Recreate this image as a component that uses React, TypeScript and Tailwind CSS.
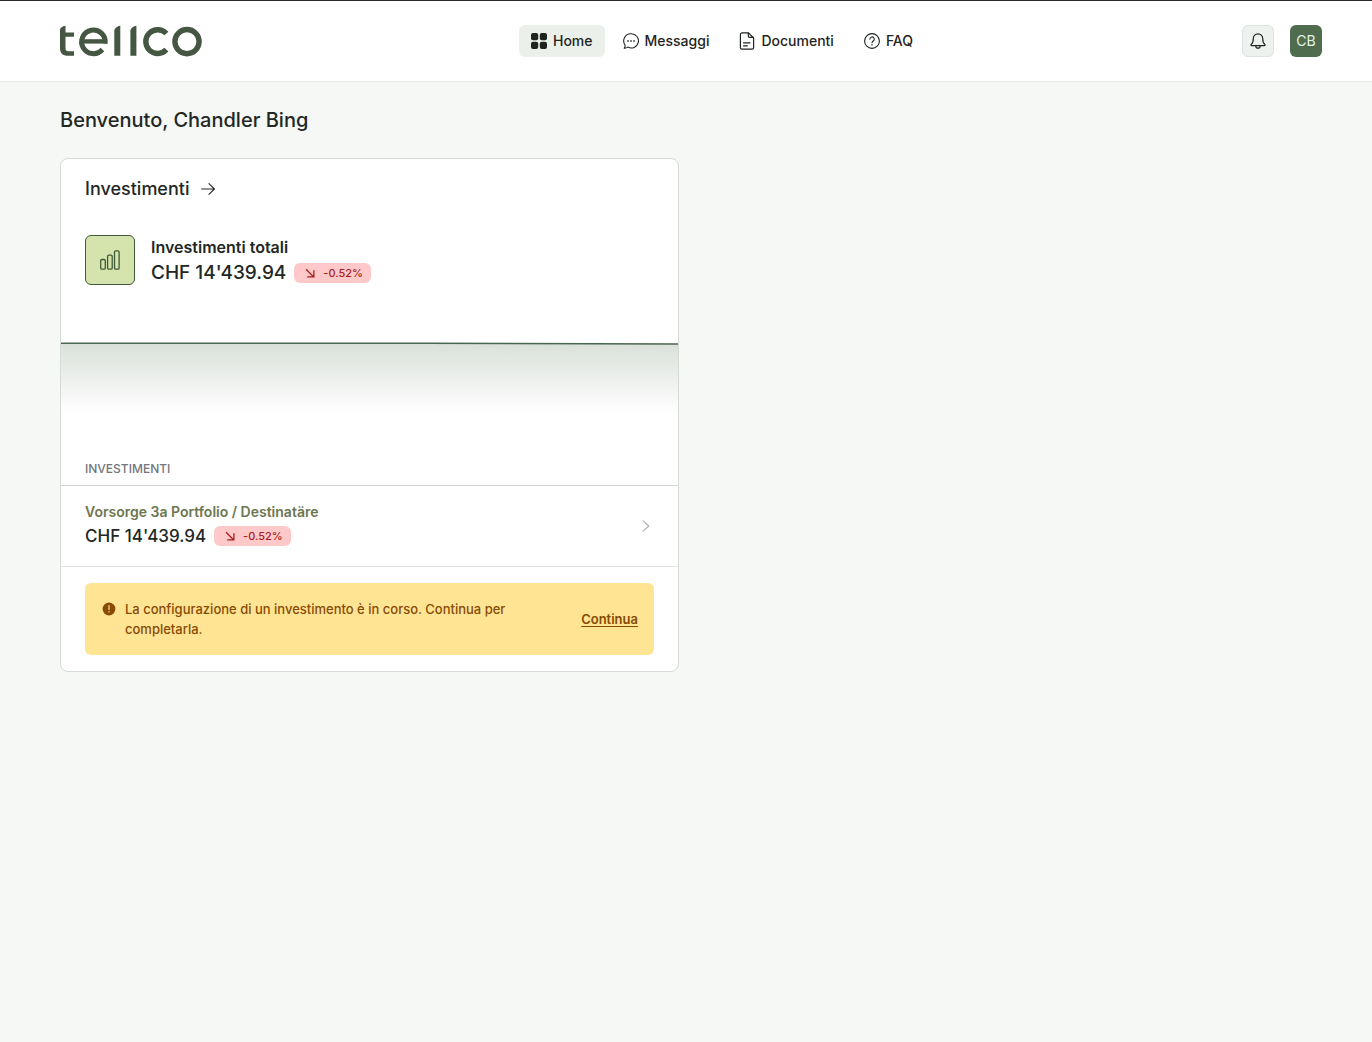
import React from 'react';

type IconProps = { className?: string };

const Logo: React.FC = () => (
  <svg viewBox="0 0 142 32" className="w-[142px] h-8" fill="none" role="img" aria-label="tellco">
    <path d="M0 4.8C0 2.800 2.400 1.200 5.500.8v6.700H14v4.200H5.500v11.600c0 2 .9 2.900 2.900 2.900H14v4.600H8.200C2.800 30.800 0 28.400 0 23.300z" fill="#455643" />
    <path d="M54.300 6c0-2.600 2.400-4.600 6-5.300v30.100h-6zM70.400 6c0-2.600 2.400-4.600 6-5.300v30.100h-6z" fill="#455643" />
    <path d="M22 16.400h24" stroke="#455643" strokeWidth="4.400" />
    <path d="M45.100 18.600A11.800 11.800 0 1 0 42.400 24.500" stroke="#455643" strokeWidth="5" />
    <path d="M106.400 8.500A11.900 11.900 0 1 0 106.400 24.700" stroke="#455643" strokeWidth="5.400" />
    <circle cx="127" cy="16.600" r="12.100" stroke="#455643" strokeWidth="5.400" />
  </svg>
);

const GridIcon: React.FC<IconProps> = ({ className }) => (
  <svg viewBox="0 0 16 16" className={className} fill="currentColor" aria-hidden="true">
    <rect x="0" y="0" width="7.200" height="7.200" rx="2" />
    <rect x="8.800" y="0" width="7.200" height="7.200" rx="2" />
    <rect x="0" y="8.800" width="7.200" height="7.200" rx="2" />
    <rect x="8.800" y="8.800" width="7.200" height="7.200" rx="2" />
  </svg>
);

const ChatIcon: React.FC<IconProps> = ({ className }) => (
  <svg viewBox="0 0 16 16" className={className} fill="none" stroke="currentColor" strokeWidth="1.100" strokeLinejoin="round" aria-hidden="true">
    <path d="M8.300.8a7.100 7.100 0 1 1-3.400 13.300c-1 .8-2.300 1.100-3.700 1 .8-.9 1.100-1.900.9-3A7.100 7.100 0 0 1 8.300.8z" />
    <path d="M4.300 7.900h1.500M7.300 7.900h1.500M10.300 7.900h1.500" strokeWidth="1.500" />
  </svg>
);

const DocumentIcon: React.FC<IconProps> = ({ className }) => (
  <svg viewBox="0 0 16 18" className={className} fill="none" stroke="currentColor" strokeWidth="1.200" strokeLinecap="round" strokeLinejoin="round" aria-hidden="true">
    <path d="M9.500.9H3A1.600 1.600 0 0 0 1.400 2.500v13A1.600 1.600 0 0 0 3 17.100h10a1.600 1.600 0 0 0 1.600-1.600V6z" />
    <path d="M9.300 1v2.900c0 .9.500 1.400 1.400 1.400h3.700" />
    <path d="M4.500 10.800h6.500M4.500 13.800h3.800" />
  </svg>
);

const QuestionIcon: React.FC<IconProps> = ({ className }) => (
  <svg viewBox="0 0 16 16" className={className} fill="none" stroke="currentColor" strokeWidth="1.100" strokeLinecap="round" aria-hidden="true">
    <circle cx="8" cy="8" r="7.400" />
    <path d="M5.900 6.100a2.200 2.200 0 1 1 3.300 1.900C8.400 8.500 8 8.900 8 9.800" />
    <path d="M8 11.800v.1" strokeWidth="1.400" />
  </svg>
);

const BellIcon: React.FC<IconProps> = ({ className }) => (
  <svg viewBox="0 0 16 16" className={className} fill="none" stroke="currentColor" strokeWidth="1.200" strokeLinecap="round" strokeLinejoin="round" aria-hidden="true">
    <path d="M8 .8a4.700 4.700 0 0 0-4.700 4.700c0 3-.5 4.600-2 5.800-.7.500-.4 1.300.3 1.300h12.800c.7 0 1-.8.300-1.300-1.500-1.200-2-2.800-2-5.800A4.700 4.700 0 0 0 8 .8z" />
    <path d="M5.800 12.900a2.200 2.200 0 0 0 4.400 0" />
  </svg>
);

const BarsIcon: React.FC<IconProps> = ({ className }) => (
  <svg viewBox="0 0 20 20" className={className} fill="none" stroke="currentColor" strokeWidth="1.300" aria-hidden="true">
    <rect x=".7" y="9.500" width="4.600" height="9.700" rx="1.300" />
    <rect x="7.600" y="5.100" width="4.600" height="14.100" rx="1.300" />
    <rect x="14.500" y=".8" width="4.600" height="18.400" rx="1.300" />
  </svg>
);

const ArrowRightIcon: React.FC<IconProps> = ({ className }) => (
  <svg viewBox="0 0 14 14" className={className} fill="none" stroke="currentColor" strokeWidth="1.100" strokeLinecap="round" strokeLinejoin="round" aria-hidden="true">
    <path d="M.6 7h12.800M8 1.700 13.400 7 8 12.300" />
  </svg>
);

const ArrowDownRightIcon: React.FC<IconProps> = ({ className }) => (
  <svg viewBox="0 0 10 10" className={className} fill="none" stroke="currentColor" strokeWidth="1.300" aria-hidden="true">
    <path d="M1 1.300 8.600 8.700M8.900 2.200v6.700H2.200" />
  </svg>
);

const ChevronRightIcon: React.FC<IconProps> = ({ className }) => (
  <svg viewBox="0 0 8 12" className={className} fill="none" stroke="currentColor" strokeWidth="1.100" strokeLinecap="round" strokeLinejoin="round" aria-hidden="true">
    <path d="M1 .8 6.800 6 1 11.200" />
  </svg>
);

const AlertIcon: React.FC<IconProps> = ({ className }) => (
  <svg viewBox="0 0 16 16" className={className} aria-hidden="true">
    <circle cx="8" cy="8" r="6.400" fill="currentColor" />
    <path d="M8 4.600v3.900M8 10.700v.2" stroke="#ffe494" strokeWidth="1.200" strokeLinecap="round" />
  </svg>
);

const NAV_ITEMS = [
  { label: 'Home', icon: <GridIcon className="w-4 h-4" />, active: true },
  { label: 'Messaggi', icon: <ChatIcon className="w-4 h-4" />, active: false },
  { label: 'Documenti', icon: <DocumentIcon className="w-4 h-[18px]" />, active: false },
  { label: 'FAQ', icon: <QuestionIcon className="w-4 h-4" />, active: false },
];

const TrendBadge: React.FC<{ value: string }> = ({ value }) => (
  <span className="inline-flex items-center gap-2 h-5 pl-[11px] pr-2 rounded-md bg-[#ffc9c9] text-[11px] font-medium text-[#a8201f]">
    <ArrowDownRightIcon className="w-2.5 h-2.5" />
    {value}
  </span>
);

const BalanceChart: React.FC = () => (
  <svg viewBox="0 0 617 126" preserveAspectRatio="none" className="block w-full h-[126px] my-6" aria-hidden="true">
    <defs>
      <linearGradient id="balance-fill" x1="0" y1="32" x2="0" y2="102" gradientUnits="userSpaceOnUse">
        <stop offset="0" stopColor="#d9e0d9" />
        <stop offset="1" stopColor="#ffffff" />
      </linearGradient>
    </defs>
    <path d="M0 32.200 365 32.300 617 33V126H0z" fill="url(#balance-fill)" />
    <path d="M0 32.200 365 32.300 617 33" fill="none" stroke="#4b6650" strokeWidth="1.500" />
  </svg>
);

const Header: React.FC = () => (
  <header className="bg-white border-t border-t-[#2b2b2b] border-b border-b-[#e9ecea]">
    <div className="flex items-center justify-between h-20 pl-[60px] pr-[50px]">
      <a href="#"><Logo /></a>
      <nav className="flex items-center gap-1.5">
        {NAV_ITEMS.map(item => (
          <a
            key={item.label}
            href="#"
            className={`flex items-center gap-1.5 h-8 px-3 rounded-md text-sm font-medium text-[#1f2421] ${item.active ? 'bg-[#ebf0eb]' : ''}`}
          >
            {item.icon}
            {item.label}
          </a>
        ))}
      </nav>
      <div className="flex items-center gap-4">
        <button aria-label="Notifiche" className="flex items-center justify-center w-8 h-8 rounded-md border border-[#dde3de] bg-[#eef2ef] text-[#1f2421]">
          <BellIcon className="w-4 h-4" />
        </button>
        <button className="w-8 h-8 rounded-md bg-[#4f6c4e] text-sm text-[#e6f3e4]">CB</button>
      </div>
    </div>
  </header>
);

const InvestmentsCard: React.FC = () => (
  <section className="rounded-lg border border-[#d5dbd6] bg-white overflow-hidden">
    <div className="px-6 pt-4">
      <h2 className="text-lg font-medium">
        <a href="#" className="inline-flex items-center gap-3">
          Investimenti
          <ArrowRightIcon className="w-3.5 h-3.5" />
        </a>
      </h2>
      <div className="flex items-start gap-4 mt-8">
        <div className="flex items-center justify-center w-[50px] h-[50px] rounded-md border border-[#3f5a37] bg-[#d5e3ad] text-[#3f5a37]">
          <BarsIcon className="w-5 h-5" />
        </div>
        <div>
          <h3 className="text-base leading-6 font-semibold">Investimenti totali</h3>
          <div className="flex items-center gap-2">
            <span className="text-[19px] leading-7 font-medium">CHF 14'439.94</span>
            <TrendBadge value="-0.52%" />
          </div>
        </div>
      </div>
    </div>

    <BalanceChart />

    <h3 className="px-6 pb-2 border-b border-[#d2d6d3] text-xs font-medium text-[#73767a]">INVESTIMENTI</h3>
    <a href="#" className="flex items-center justify-between px-6 py-4 border-b border-[#e1e5e2]">
      <div>
        <div className="text-sm font-semibold text-[#6d7650]">Vorsorge 3a Portfolio / Destinatäre</div>
        <div className="flex items-center gap-2">
          <span className="text-[17px] leading-7 font-medium">CHF 14'439.94</span>
          <TrendBadge value="-0.52%" />
        </div>
      </div>
      <ChevronRightIcon className="w-2 h-3 mr-1 text-[#a9aeaa]" />
    </a>

    <div className="px-6 py-4">
      <div role="status" className="flex items-center gap-16 p-4 rounded-md bg-[#ffe494] text-[13px] leading-5 font-medium text-[#874b05]">
        <div className="flex flex-1 gap-2">
          <AlertIcon className="shrink-0 w-4 h-4 mt-0.5" />
          <p>La configurazione di un investimento è in corso. Continua per completarla.</p>
        </div>
        <a href="#" className="font-semibold underline underline-offset-2">Continua</a>
      </div>
    </div>
  </section>
);

const App: React.FC = () => {
  return (
    <div className="min-h-screen bg-[#f5f8f5] font-[Inter,sans-serif] text-[#222724]">
      <Header />
      <main className="px-[60px] py-6">
        <h1 className="mb-6 text-xl font-medium">Benvenuto, Chandler Bing</h1>
        <div className="grid grid-cols-2 gap-3.5">
          <InvestmentsCard />
        </div>
      </main>
    </div>
  );
};

export default App;
